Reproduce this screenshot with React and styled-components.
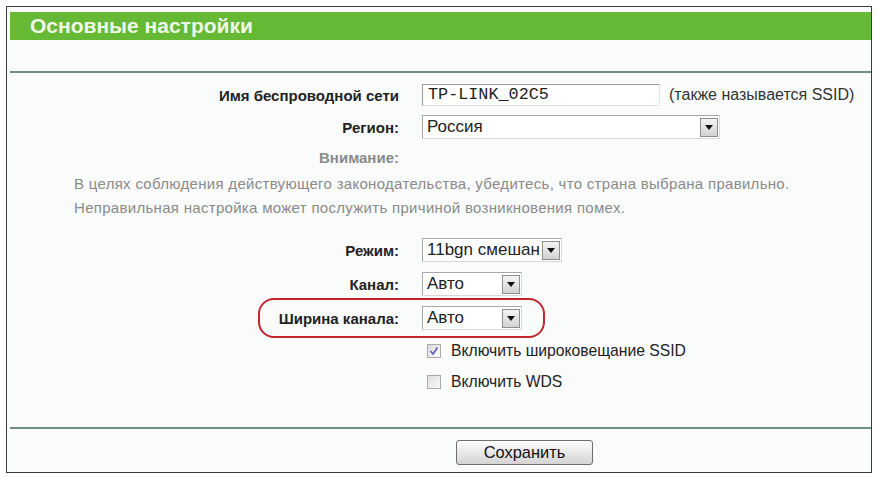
import React from 'react'
import styled, { createGlobalStyle } from 'styled-components'

const GlobalStyle = createGlobalStyle`
  html, body {
    margin: 0;
    padding: 0;
    background: #ffffff;
  }
  body {
    font-family: "Liberation Sans", Arial, sans-serif;
  }
`

const Page = styled.div`
  width: 878px;
  height: 478px;
  padding: 6px 0 0 6px;
  box-sizing: border-box;
`

const Frame = styled.div`
  width: 866px;
  height: 467px;
  box-sizing: border-box;
  border: 1px solid #3a3a3a;
  background: #fafbfb;
  display: flex;
  flex-direction: column;
`

const Header = styled.div`
  margin: 5px 0 0 3px;
  height: 28px;
  background: #66b934;
  color: #eef8e6;
  font-size: 21px;
  font-weight: bold;
  display: flex;
  align-items: center;
  padding-left: 20px;
`

const Divider = styled.div`
  margin: ${p => p.top}px 0 0 3px;
  height: 2px;
  background: #6f8f84;
`

const Form = styled.div`
  display: flex;
  flex-direction: column;
  padding-top: 6px;
`

const Row = styled.div`
  position: relative;
  display: flex;
  align-items: center;
  height: ${p => p.h || 32}px;

  ${p => p.highlight && `
    &::after {
      content: '';
      position: absolute;
      left: 251px;
      top: -3px;
      width: 287px;
      height: 40px;
      box-sizing: border-box;
      border: 2px solid #c4262e;
      border-radius: 16px;
      pointer-events: none;
    }
  `}
`

const Label = styled.div`
  width: 392px;
  text-align: right;
  font-size: 15px;
  font-weight: bold;
  color: ${p => (p.muted ? '#8a8a8a' : '#222222')};
  flex: none;
`

const Control = styled.div`
  margin-left: ${p => (p.indent ? 28 : 23)}px;
  display: flex;
  align-items: center;
`

const TextInput = styled.div`
  width: 238px;
  height: 22px;
  box-sizing: border-box;
  border-top: 1px solid #9a9a9a;
  border-left: 1px solid #9a9a9a;
  border-right: 1px solid #e2e2e2;
  border-bottom: 1px solid #e2e2e2;
  background: #ffffff;
  font-family: "Liberation Mono", "Courier New", monospace;
  font-size: 16.8px;
  color: #222;
  padding-left: 5px;
  line-height: 20px;
`

const Hint = styled.span`
  margin-left: 9px;
  font-size: 16px;
  color: #333;
`

const SelectBox = styled.div`
  width: ${p => p.w}px;
  height: 24px;
  box-sizing: border-box;
  border-top: 1px solid #a8a8a8;
  border-left: 1px solid #a8a8a8;
  border-right: 1px solid #d8d8d8;
  border-bottom: 1px solid #d8d8d8;
  background: #ffffff;
  display: flex;
  align-items: center;
  overflow: hidden;
`

const SelectText = styled.div`
  flex: 1;
  padding-left: 4px;
  font-size: 17px;
  color: #222;
  white-space: nowrap;
  overflow: hidden;
`

const ArrowButton = styled.div`
  flex: none;
  width: 18px;
  height: 19px;
  margin-right: 1px;
  box-sizing: border-box;
  border: 1px solid #8e8e8e;
  background: linear-gradient(#f4f4f4, #d2d2d2);
  display: flex;
  align-items: center;
  justify-content: center;
`

const Notice = styled.div`
  padding-left: 67px;
  font-size: 15px;
  letter-spacing: 0.3px;
  line-height: 24px;
  color: #8a8a8a;
`

const Check = styled.div`
  width: 14px;
  height: 14px;
  box-sizing: border-box;
  border: 1px solid #a9a9a9;
  background: linear-gradient(135deg, #dcdcdc, #fbfbfb);
  display: flex;
  align-items: center;
  justify-content: center;
`

const CheckLabel = styled.span`
  margin-left: 10px;
  font-size: 15.7px;
  color: #222;
`

const Footer = styled.div`
  display: flex;
  padding: 11px 0 0 449px;
`

const SaveButton = styled.div`
  width: 137px;
  height: 25px;
  box-sizing: border-box;
  border: 1px solid #6f6f6f;
  border-radius: 3px;
  background: linear-gradient(#fdfdfd, #e6e6e6 55%, #d4d4d4);
  display: flex;
  align-items: center;
  justify-content: center;
  font-size: 16.4px;
  color: #111;
`

const Arrow = () => (
  <svg width="8" height="5" viewBox="0 0 8 5">
    <path d="M0 0 L8 0 L4 5 Z" fill="#111" />
  </svg>
)

const Select = ({ w, value }) => (
  <SelectBox w={w}>
    <SelectText>{value}</SelectText>
    <ArrowButton><Arrow /></ArrowButton>
  </SelectBox>
)

const Checkbox = ({ checked }) => (
  <Check>
    {checked && (
      <svg width="10" height="10" viewBox="0 0 10 10">
        <path d="M1.5 5 L4 8 L8.5 1.5" fill="none" stroke="#5a5ab8" strokeWidth="1.6" />
      </svg>
    )}
  </Check>
)

const App = () => (
  <Page>
    <GlobalStyle />
    <Frame>
      <Header>Основные настройки</Header>
      <Divider top={31} />
      <Form>
        <Row>
          <Label>Имя беспроводной сети</Label>
          <Control>
            <TextInput>TP-LINK_02C5</TextInput>
            <Hint>(также называется SSID)</Hint>
          </Control>
        </Row>
        <Row>
          <Label>Регион:</Label>
          <Control><Select w={298} value="Россия" /></Control>
        </Row>
        <Row h={29}>
          <Label muted>Внимание:</Label>
        </Row>
        <Notice>
          В целях соблюдения действующего законодательства, убедитесь, что страна выбрана правильно.
          <br />
          Неправильная настройка может послужить причиной возникновения помех.
        </Notice>
        <Row h={13} />
        <Row h={34}>
          <Label>Режим:</Label>
          <Control><Select w={140} value="11bgn смешан" /></Control>
        </Row>
        <Row h={34}>
          <Label>Канал:</Label>
          <Control><Select w={100} value="Авто" /></Control>
        </Row>
        <Row h={34} highlight>
          <Label>Ширина канала:</Label>
          <Control><Select w={100} value="Авто" /></Control>
        </Row>
        <Row h={31}>
          <Label />
          <Control indent>
            <Checkbox checked />
            <CheckLabel>Включить широковещание SSID</CheckLabel>
          </Control>
        </Row>
        <Row h={31}>
          <Label />
          <Control indent>
            <Checkbox />
            <CheckLabel>Включить WDS</CheckLabel>
          </Control>
        </Row>
      </Form>
      <Divider top={30} />
      <Footer>
        <SaveButton>Сохранить</SaveButton>
      </Footer>
    </Frame>
  </Page>
)

export default App
